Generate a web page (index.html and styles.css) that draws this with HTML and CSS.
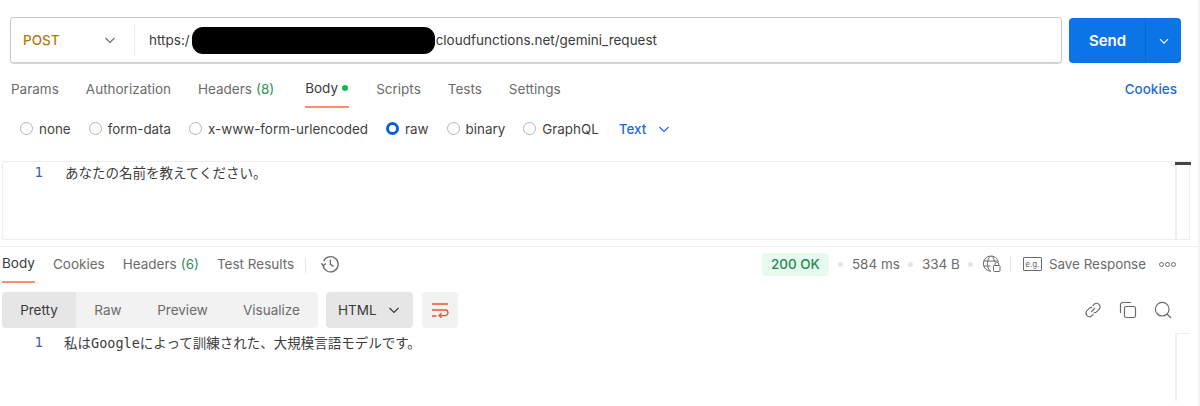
FILE: index.html
```html
<!DOCTYPE html>
<html lang="ja">
<head>
<meta charset="utf-8">
<title>POST gemini_request</title>
<link rel="stylesheet" href="styles.css">
</head>
<body>
<main class="page">
  <section class="url-row">
    <div class="url-box">
      <div class="method"><span class="method-name">POST</span>
        <svg class="chev" width="12" height="12" viewBox="0 0 12 12"><path d="M1.5 4l4.5 4.5L10.5 4" fill="none" stroke="#6b6b6b" stroke-width="1.1"/></svg>
      </div>
      <div class="url-text">https:/<span class="redact"></span>cloudfunctions.net/gemini_request</div>
    </div>
    <div class="send">
      <span class="send-label">Send</span>
      <span class="send-drop"><svg width="12" height="12" viewBox="0 0 12 12"><path d="M2 4.2l4 4 4-4" fill="none" stroke="#fff" stroke-width="1.1"/></svg></span>
    </div>
  </section>

  <nav class="req-tabs">
    <span class="tab">Params</span>
    <span class="tab">Authorization</span>
    <span class="tab">Headers <em class="count">(8)</em></span>
    <span class="tab active">Body <i class="dot"></i></span>
    <span class="tab">Scripts</span>
    <span class="tab">Tests</span>
    <span class="tab">Settings</span>
    <span class="cookies">Cookies</span>
  </nav>

  <div class="radios">
    <label class="radio"><i class="circle"></i>none</label>
    <label class="radio"><i class="circle"></i>form-data</label>
    <label class="radio"><i class="circle"></i>x-www-form-urlencoded</label>
    <label class="radio"><i class="circle on"></i>raw</label>
    <label class="radio"><i class="circle"></i>binary</label>
    <label class="radio"><i class="circle"></i>GraphQL</label>
    <span class="text-type">Text
      <svg width="12" height="12" viewBox="0 0 12 12"><path d="M1.5 4l4.5 4.5L10.5 4" fill="none" stroke="#1d6bd6" stroke-width="1.1"/></svg>
    </span>
  </div>

  <section class="editor">
    <div class="code-line"><span class="ln">1</span><span class="code">あなたの名前を教えてください。</span></div>
    <div class="gutter"><i class="thumb"></i></div>
  </section>

  <nav class="res-head">
    <span class="rtab active">Body</span>
    <span class="rtab">Cookies</span>
    <span class="rtab">Headers <em class="count">(6)</em></span>
    <span class="rtab">Test Results</span>
    <i class="vsep"></i>
    <svg class="hist" width="20" height="20" viewBox="0 0 20 20" fill="none" stroke="#6b6b6b" stroke-width="1.3"><path d="M3.6 7.2A7.6 7.6 0 1 1 3 11.2"/><path d="M1.2 9.2l2.2 2.4 2.4-2.2"/><path d="M10.4 5.6v4.8l3.2 2"/></svg>
    <div class="res-meta">
      <span class="status">200 OK</span>
      <i class="mdot"></i><span class="metric">584 ms</span>
      <i class="mdot"></i><span class="metric">334 B</span>
      <i class="mdot"></i>
      <svg class="globe" width="19" height="18" viewBox="0 0 19 18" fill="none" stroke="#6b6b6b" stroke-width="1"><path d="M9 16.2A7.6 7.6 0 1 1 16.4 7"/><path d="M1.6 6h13.6M1.4 11h7"/><path d="M8.4 1c-4 4-4 11 0 15.2M9.6 1c1.8 1.8 2.8 4 3.1 6"/><rect x="11.5" y="10.5" width="6.5" height="6" rx="1"/><path d="M13 10.5V9a1.8 1.8 0 0 1 3.6 0v1.5"/></svg>
      <i class="vsep small"></i>
      <span class="eg">e.g.</span>
      <span class="save">Save Response</span>
      <span class="more"><i></i><i></i><i></i></span>
    </div>
  </nav>

  <div class="res-tools">
    <div class="seg">
      <span class="seg-item sel">Pretty</span>
      <span class="seg-item s2">Raw</span>
      <span class="seg-item s3">Preview</span>
      <span class="seg-item s4">Visualize</span>
    </div>
    <div class="lang">HTML
      <svg width="12" height="12" viewBox="0 0 12 12"><path d="M1.5 4l4.5 4.5L10.5 4" fill="none" stroke="#3a3a3a" stroke-width="1.2"/></svg>
    </div>
    <div class="wrap-btn">
      <svg width="18" height="16" viewBox="0 0 18 16" fill="none" stroke="#e2592f" stroke-width="1.3"><path d="M1 2h16M1 8h13.2a2.8 2.8 0 0 1 0 5.6H8.5M1 14h4.5"/><path d="M10.6 11.2l-2.6 2.4 2.6 2.2"/></svg>
    </div>
    <div class="tools-right">
      <svg width="18" height="18" viewBox="0 0 18 18" fill="none" stroke="#6b6b6b" stroke-width="1.1"><path d="M7.2 10.8l3.8-3.8"/><path d="M8.6 4.8l1.8-1.8a3.6 3.6 0 0 1 5 5l-2.6 2.6a3.6 3.6 0 0 1-3 1"/><path d="M9.4 13.2l-1.8 1.8a3.6 3.6 0 0 1-5-5l2.6-2.6a3.6 3.6 0 0 1 3-1"/></svg>
      <svg width="18" height="18" viewBox="0 0 18 18" fill="none" stroke="#6b6b6b" stroke-width="1.2"><rect x="5.5" y="5.5" width="11" height="11" rx="1.8"/><path d="M12 1.5H4A2.5 2.5 0 0 0 1.5 4v8"/></svg>
      <svg width="18" height="18" viewBox="0 0 18 18" fill="none" stroke="#6b6b6b" stroke-width="1.2"><circle cx="8.2" cy="8.2" r="6.8"/><path d="M13 13l4 4"/></svg>
    </div>
  </div>

  <section class="output">
    <div class="code-line"><span class="ln">1</span><span class="code">私は<span class="mono">Google</span>によって訓練された、大規模言語モデルです。</span></div>
    <div class="gutter"></div>
  </section>
</main>
</body>
</html>
```
FILE: styles.css
```css
* { box-sizing: border-box; }
html, body { margin: 0; background: #fff; }
body {
  width: 1200px;
  height: 406px;
  overflow: hidden;
  font-family: Inter, "Noto Sans CJK JP", sans-serif;
  font-size: 13.5px;
  color: #6b6b6b;
}
i, em { font-style: normal; }
.page {
  height: 406px;
  padding-top: 17px;
  border-right: 2px solid #f2f2f2;
}

/* URL row */
.url-row { display: flex; height: 47px; padding-left: 10px; }
.url-box {
  width: 1052px;
  height: 47px;
  display: flex;
  align-items: center;
  border: 1px solid #c9c9c9;
  border-bottom: 2px solid #d4d4d4;
  border-radius: 4px;
}
.method {
  width: 124px;
  height: 28px;
  padding-left: 12px;
  display: flex;
  align-items: center;
  border-right: 1px solid #ededed;
  font-weight: 500;
  color: #b07c10;
}
.method-name { width: 81px; }
.url-text { padding-left: 14px; display: flex; align-items: center; color: #3a3a3a; white-space: nowrap; }
.redact { width: 243px; height: 27px; margin: 0 1px 0 2px; background: #000; border-radius: 11px; }
.send {
  margin-left: 7px;
  margin-top: 1px;
  width: 112px;
  height: 45px;
  display: flex;
  background: #0b75e8;
  border-radius: 4px;
  color: #fff;
}
.send-label {
  width: 77px;
  display: flex;
  align-items: center;
  justify-content: center;
  padding-left: 1px;
  font-size: 15px;
  font-weight: 600;
  border-right: 1px solid #0a68d0;
}
.send-drop { flex: 1; display: flex; align-items: center; justify-content: center; }

/* Request tabs */
.req-tabs {
  display: flex;
  gap: 27px;
  height: 44px;
  padding-left: 11px;
  padding-right: 21px;
}
.tab { display: flex; align-items: center; gap: 4px; height: 44px; padding-top: 5px; white-space: nowrap; }
.tab.active { width: 44px; margin-left: 4px; color: #3a3a3a; border-bottom: 2px solid #ff8f6b; }
.count { color: #2f8f5b; }
.dot { width: 6px; height: 6px; border-radius: 50%; background: #12b84f; }
.cookies { margin-left: auto; padding-top: 5px; display: flex; align-items: center; font-weight: 500; color: #1d6bd6; }

/* Body type radios */
.radios { display: flex; align-items: center; height: 43px; padding: 0 0 2px 20px; font-size: 13.4px; }
.radio { display: flex; align-items: center; gap: 6px; margin-right: 18px; color: #3f3f3f; white-space: nowrap; }
.circle { width: 13px; height: 13px; border-radius: 50%; border: 1px solid #b5b5b5; }
.circle.on { border: 3.5px solid #0b5fd6; }
.text-type { display: flex; align-items: center; gap: 12px; margin-left: 2px; font-weight: 500; color: #1d6bd6; }

/* Editors */
.editor {
  display: flex;
  height: 79px;
  margin: 10px 8px 0 2px;
  border: 1px solid #eeeeee;
  border-right: 0;
  border-radius: 3px 0 0 3px;
}
.code-line { flex: 1; display: flex; align-items: flex-start; }
.ln { width: 40px; text-align: right; font-family: "DejaVu Sans Mono", monospace; font-size: 14px; line-height: 20px; color: #3e5fa8; }
.code { margin-left: 21px; font-size: 13.5px; line-height: 20px; color: #3c3c3c; font-family: "Noto Sans CJK JP", sans-serif; white-space: nowrap; }
.editor .code { margin-left: 22px; }
.mono { font-family: "DejaVu Sans Mono", monospace; }
.gutter { position: relative; width: 15px; border-left: 2px solid #eeeeee; border-right: 1px solid #eeeeee; }
.thumb { position: absolute; top: 0; left: -2px; width: 16px; height: 3px; background: #444; }

/* Response header */
.res-head {
  display: flex;
  align-items: center;
  height: 37px;
  margin-top: 6px;
  border-top: 1px solid #eeeeee;
  padding-left: 2px;
}
.rtab { display: flex; align-items: center; height: 36px; padding-bottom: 2px; margin-right: 18px; white-space: nowrap; }
.rtab.active { color: #3a3a3a; border-bottom: 2px solid #ff8f6b; width: 33px; }
.rtab .count { margin-left: 4px; }
.vsep { width: 1px; height: 16px; background: #e6e6e6; margin: 0 14px 0 -7px; }
.vsep.small { margin: 0 3px 0 0; }
.hist { margin-top: -2px; }
.res-meta { margin: -2px 0 0 auto; display: flex; align-items: center; gap: 9px; padding-right: 22px; }
.status { background: #e7faef; color: #1f8a4c; font-weight: 500; border-radius: 4px; padding: 0 9px; height: 23px; display: flex; align-items: center; }
.mdot { width: 5px; height: 5px; border-radius: 50%; background: #e6e6e6; }
.metric { margin-right: -1px; }
.eg { width: 19px; height: 14px; border: 1px solid #6b6b6b; border-radius: 1px; font-size: 8px; line-height: 12px; text-align: center; margin-right: -2px; }
.save { font-size: 13.4px; white-space: nowrap; }
.more { display: flex; gap: 1px; margin-left: 4px; }
.more i { width: 5px; height: 5px; border: 1px solid #6b6b6b; border-radius: 50%; }

/* Response toolbar */
.res-tools { display: flex; align-items: center; height: 36px; margin-top: 9px; padding-left: 2px; }
.seg { display: flex; width: 316px; height: 36px; background: #f2f2f2; border-radius: 4px; overflow: hidden; }
.seg-item { display: flex; align-items: center; justify-content: center; padding-bottom: 1px; }
.seg-item.sel { width: 74px; background: #e6e6e6; color: #3a3a3a; }
.s2 { width: 64px; }
.s3 { width: 85px; }
.s4 { width: 93px; }
.lang { width: 87px; height: 36px; margin-left: 8px; padding: 0 13px 1px 12px; display: flex; align-items: center; justify-content: space-between; background: #e6e6e6; border-radius: 4px; color: #3a3a3a; }
.wrap-btn { width: 36px; height: 36px; margin-left: 9px; display: flex; align-items: center; justify-content: center; background: #f2f2f2; border-radius: 4px; }
.tools-right { margin-left: auto; display: flex; gap: 17px; padding-right: 26px; }

/* Output */
.output { display: flex; height: 73px; padding: 5px 8px 0 3px; }
.output .code-line { margin-top: -1px; }
.output .gutter { height: 68px; border-top: 1px solid #eeeeee; border-right: 0; }
```
